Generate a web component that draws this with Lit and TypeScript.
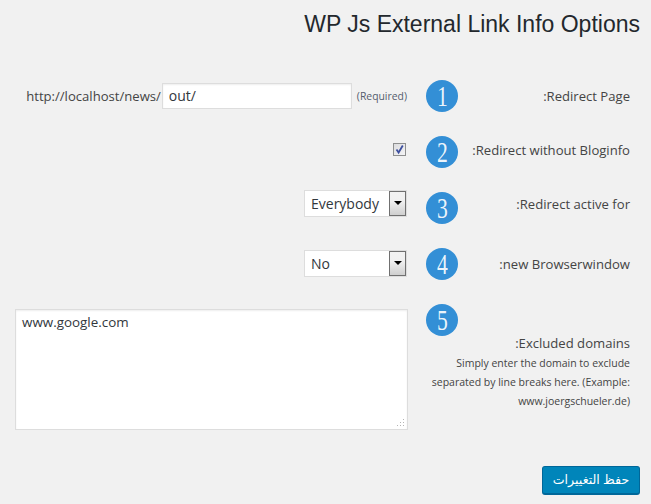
import { LitElement, html, css } from "lit";
import { customElement } from "lit/decorators.js";

const FONT = css`"Open Sans", "Noto Sans", sans-serif`;

@customElement("app-root")
export class AppRoot extends LitElement {
  static styles = css`
    :host {
      display: block;
      height: 504px;
      overflow: hidden;
      background: #f1f1f1;
      color: #444;
      font-family: ${FONT};
      font-size: 13.1px;
      direction: rtl;
    }
    * { box-sizing: border-box; }
    h1 {
      margin: 0;
      padding: 10px 11px 0 0;
      height: 79px;
      font: 400 23px/29px "Liberation Sans", Arial, sans-serif;
      color: #23282d;
      text-align: right;
    }
    .row {
      display: grid;
      grid-template-columns: 172px 32px 1fr;
      grid-template-rows: 34px;
      padding: 0 21px 0 0;
      align-items: center;
    }
    .r1 { height: 34px; margin-bottom: 20px; }
    .r2 { height: 34px; margin-bottom: 20px; }
    .r3 { height: 34px; margin-bottom: 26px; }
    .r4 { height: 34px; margin-bottom: 23px; }
    .r2 .num { margin-top: 4px; }
    .r3 .num { margin-top: 8px; }
    .label { direction: ltr; text-align: right; line-height: 20px; }
    .num {
      width: 32px; height: 32px; border-radius: 50%;
      background: #338fd6;
      color: rgba(255, 255, 255, 0.92);
      display: flex; align-items: center; justify-content: center;
      font: 400 30px/32px "Liberation Serif", serif;
      flex: none;
    }
    .num span { display: block; transform: scaleX(0.72); }
    .field { display: flex; align-items: center; justify-content: flex-start; padding-right: 19px; }
    .url { direction: ltr; display: flex; align-items: center; gap: 1px; }
    input {
      width: 190px; height: 26px;
      border: 1px solid #ddd;
      background: #fff;
      box-shadow: inset 0 1px 2px rgba(0,0,0,.07);
      font: 14px ${FONT}; color: #32373c;
      padding: 0 3px 0 6px;
      margin: 0 0 1px;
      outline: none;
    }
    .req { font-size: 10.4px; color: #555d6e; margin-left: 4px; }
    .check {
      width: 13px; height: 13px;
      border: 1px solid #8e8f8f;
      background: linear-gradient(135deg, #dcdcde, #f4f4f6);
      display: block;
      margin: -1px 1px 0 0;
    }
    .select {
      width: 103px; height: 27px;
      border: 1px solid #ddd;
      background: #fff;
      display: flex; direction: ltr;
      align-items: center; justify-content: space-between;
      color: #32373c;
      font-size: 14px;
      padding-left: 6px;
      margin-top: -1px;
    }
    .arrow {
      width: 17px; height: 25px;
      border: 1px solid #707070;
      background: linear-gradient(#f2f2f2, #f0f0f0 40%, #cfcfcf);
      display: flex; align-items: flex-start; justify-content: center;
      padding-top: 9px;
      flex: none;
    }
    .arrow i {
      display: block; width: 0; height: 0;
      border: 4px solid transparent; border-top: 4px solid #000; border-bottom: 0;
    }
    .r5 { display: flex; align-items: flex-start; padding-right: 21px; gap: 18px; }
    .side { width: 204px; flex: none; display: flex; flex-direction: column; align-items: flex-end; }
    .desc { width: 100%; margin-top: -3px; direction: ltr; text-align: right; }
    .desc p { margin: 1px 0 0; font-size: 10.5px; line-height: 19px; color: #444; white-space: nowrap; }
    .ta { position: relative; margin-top: 5px; height: 121px; width: 393px; flex: none; }
    textarea {
      display: block; width: 100%; height: 100%;
      border: 1px solid #ddd; background: #fff;
      box-shadow: inset 0 1px 2px rgba(0,0,0,.07);
      font: 13.4px ${FONT}; color: #32373c; direction: ltr;
      padding: 3px 6px 2px; margin: 0; resize: none; outline: none;
    }
    .grip { position: absolute; left: 381px; top: 109px; width: 9px; height: 9px; }
    .foot { display: flex; justify-content: flex-start; padding: 0 11px 0 0; margin-top: 36px; }
    button {
      width: 98px; height: 29px;
      background: #0085ba;
      border: 1px solid #006799;
      border-bottom-width: 2px;
      border-radius: 3px;
      color: #fff;
      font: 12.6px/26px Tahoma, "Noto Sans", "DejaVu Sans", sans-serif;
      padding: 0;
    }
  `;

  render() {
    return html`
      <h1><span dir="ltr">WP Js External Link Info Options</span></h1>

      <div class="row r1">
        <div class="label">:Redirect Page</div>
        <div class="num"><span>1</span></div>
        <div class="field">
          <div class="url">
            <span>http://localhost/news/</span>
            <input type="text" .value=${"out/"} />
            <span class="req">(Required)</span>
          </div>
        </div>
      </div>

      <div class="row r2">
        <div class="label">:Redirect without Bloginfo</div>
        <div class="num"><span>2</span></div>
        <div class="field">
          <svg class="check" viewBox="0 0 11 11" aria-hidden="true">
            <path d="M2.5 5.5 L4.6 8.5 L8.8 1.5" fill="none" stroke="#3d4f9e" stroke-width="1.8" />
          </svg>
        </div>
      </div>

      <div class="row r3">
        <div class="label">:Redirect active for</div>
        <div class="num"><span>3</span></div>
        <div class="field">
          <div class="select"><span>Everybody</span><div class="arrow"><i></i></div></div>
        </div>
      </div>

      <div class="row r4">
        <div class="label">:new Browserwindow</div>
        <div class="num"><span>4</span></div>
        <div class="field">
          <div class="select"><span>No</span><div class="arrow"><i></i></div></div>
        </div>
      </div>

      <div class="r5">
        <div class="side">
          <div class="num"><span>5</span></div>
          <div class="desc">
            <div class="label">:Excluded domains</div>
            <p>Simply enter the domain to exclude<br />separated by line breaks here. (Example:<br />www.joergschueler.de)</p>
          </div>
        </div>
        <div class="ta">
          <textarea .value=${"www.google.com"}></textarea>
          <svg class="grip" viewBox="0 0 9 9" aria-hidden="true">
            <g fill="#b5b5b5">
              <rect x="7" y="1" width="1" height="1" /><rect x="7" y="4" width="1" height="1" /><rect x="7" y="7" width="1" height="1" />
              <rect x="4" y="4" width="1" height="1" /><rect x="4" y="7" width="1" height="1" /><rect x="1" y="7" width="1" height="1" />
            </g>
          </svg>
        </div>
      </div>

      <div class="foot"><button>حفظ التغييرات</button></div>
    `;
  }
}
